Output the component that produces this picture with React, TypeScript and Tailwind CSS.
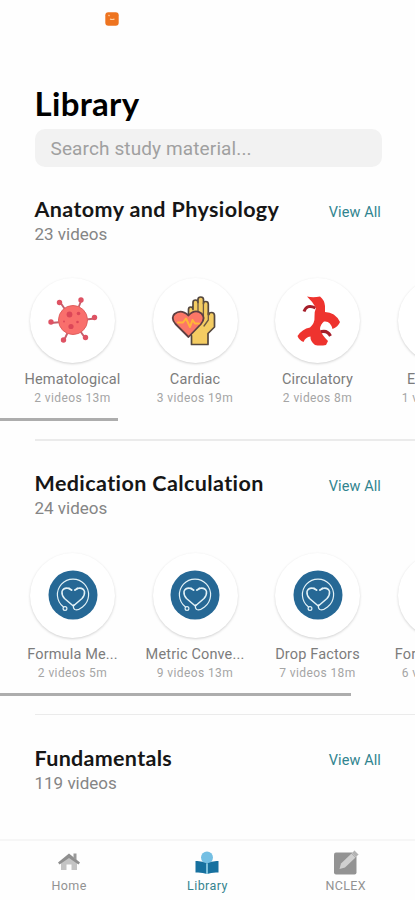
import clsx from "clsx";
import type { ReactNode } from "react";

interface Topic {
  name: string;
  info: string;
  icon?: ReactNode;
}

interface SectionProps {
  title: string;
  total: string;
  titleClass: string;
  topics?: Topic[];
  barClass?: string;
}

const VirusIcon = () => (
  <svg width="50" height="50" viewBox="0 0 50 50">
    <g stroke="#c4606c" strokeWidth="1.9">
      <path d="M25 25 12 6M25 25 33.500 4M25 25 47 22.500M25 25 37.500 42.500M25 25 15.500 45.500M25 25 2.500 27" />
    </g>
    <g fill="#de5263">
      <circle cx="11.500" cy="6.500" r="2.700" />
      <circle cx="33" cy="4" r="2.700" />
      <circle cx="46.500" cy="21.500" r="2.700" />
      <circle cx="37.500" cy="41.500" r="2.700" />
      <circle cx="15.500" cy="44" r="2.700" />
      <circle cx="3" cy="26" r="2.700" />
    </g>
    <circle cx="25" cy="24" r="14.500" fill="#f96f6c" stroke="#e0605f" strokeWidth="1" />
    <g fill="#dc4658">
      <circle cx="21.500" cy="18.500" r="2.900" />
      <circle cx="30.500" cy="17.500" r="1.800" />
      <circle cx="23" cy="30.500" r="2.600" />
      <circle cx="29.500" cy="26" r="1.300" />
      <circle cx="16" cy="25.500" r=".9" />
    </g>
  </svg>
);

const HeartHandIcon = () => (
  <svg width="50" height="50" viewBox="0 0 50 50" strokeLinejoin="round" strokeLinecap="round">
    <path
      d="M21.500 48.500V40L18.500 30V13.500Q18.500 11 20.700 11Q23 11 23 13.500V6.500Q23 4 25.500 4Q28 4 28 6.500V3.500Q28 1 30.700 1Q33.500 1 33.500 3.500V7.500Q33.500 5.500 35.700 5.500Q38.300 5.500 38.300 8V18.500L39 18.500Q39 16.500 41.500 16.500Q44.500 16.500 44.500 19.500V31L38 37.500V48.500Z"
      fill="#f4cc62"
      stroke="#55483f"
      strokeWidth="1.700"
    />
    <path d="M28 6V19M33.400 7V20M38.300 17V24L34 30" fill="none" stroke="#6b5843" strokeWidth="1.300" />
    <path
      d="M18.500 41 5.500 28Q.500 22 4.500 18Q11 12.500 18.500 19.500Q25 12.500 31.500 17.500Q36 22 31 28Z"
      fill="#fb7767"
      stroke="#5d3f42"
      strokeWidth="1.800"
    />
    <path d="M8 26.500H13L16 22.500L20 31L22.500 24L25 27.500H29" fill="none" stroke="#ffb638" strokeWidth="2" />
  </svg>
);

const ArteryIcon = () => (
  <svg width="50" height="50" viewBox="0 0 50 50" fill="none">
    <path d="M22.500 12Q14 7.500 11 15.500" stroke="#a51e2a" strokeWidth="3" />
    <path d="M26 36.500Q34 33 37.500 40" stroke="#a51e2a" strokeWidth="3" />
    <path
      d="M14 .500Q20 2 27 .500Q31.500 4 32 10V16Q42 16 47 26Q45 31 39.500 33Q37.500 24.500 31 25.500Q27.500 28 27 33Q28 38 35 45L33 49Q27 50 22 49Q17 45 17.500 40.500Q12.500 41 10.500 46Q6 44 4.500 40Q9 33 17 31.500Q22 27 21.500 21Q21 16 23 12Q20 6 14 .500Z"
      fill="#ee332e"
    />
  </svg>
);

const StethoscopeIcon = () => (
  <svg width="50" height="50" viewBox="0 0 50 50" fill="none">
    <circle cx="25" cy="25" r="24.500" fill="#266895" />
    <g stroke="#e3f2f7" strokeLinecap="round" strokeLinejoin="round">
      <path d="M15.500 37A15.600 15.600 0 1 1 34.500 37Q29.500 41 26.800 39.500Q24.500 38 26 34.500" strokeWidth="1.200" />
      <path d="M21.500 18.500Q15.500 17 14 21.500Q13.500 25 16.500 28.500L25.300 36L34 28.500Q37 25 36.500 21.500Q35 17 29 18.500" strokeWidth="1.500" />
      <path d="M21 18.500 23.500 20M29.500 18.500 27 20" strokeWidth="2" />
      <circle cx="17" cy="38.500" r="1.900" strokeWidth="1.200" />
    </g>
  </svg>
);

const anatomyTopics: Topic[] = [
  { name: "Hematological", info: "2 videos 13m", icon: <VirusIcon /> },
  { name: "Cardiac", info: "3 videos 19m", icon: <HeartHandIcon /> },
  { name: "Circulatory", info: "2 videos 8m", icon: <ArteryIcon /> },
  { name: "Endocrine", info: "1 videos 10m" },
];

const medicationTopics: Topic[] = [
  { name: "Formula Me...", info: "2 videos 5m", icon: <StethoscopeIcon /> },
  { name: "Metric Conve...", info: "9 videos 13m", icon: <StethoscopeIcon /> },
  { name: "Drop Factors", info: "7 videos 18m", icon: <StethoscopeIcon /> },
  { name: "Formula Me...", info: "6 videos 21m" },
];

const TopicItem = ({ topic }: { topic: Topic }) => {
  return (
    <div className="flex w-[122.5px] shrink-0 flex-col items-center whitespace-nowrap">
      <div className="flex size-[85px] items-center justify-center rounded-full bg-white shadow-[0_1px_2.5px_rgba(0,0,0,0.18)]">
        {topic.icon}
      </div>
      <div className="mt-[7px] text-[14.5px] leading-5 tracking-[0.15px] text-[#7c7c7c]">{topic.name}</div>
      <div className="text-[12px] leading-4 tracking-[0.4px] text-[#a5a5a5]">{topic.info}</div>
    </div>
  );
};

const Section = ({ title, total, titleClass, topics, barClass }: SectionProps) => {
  return (
    <section className={clsx("shrink-0", topics && "h-[274.4px]")}>
      <div className="flex items-center justify-between pr-[34px] pl-[34.5px]">
        <h2 className={clsx("-mt-px mb-px font-['Lato'] text-[21.5px] leading-[26px] font-bold text-[#161616]", titleClass)}>
          {title}
        </h2>
        <span className="pt-[5px] text-[14.5px] leading-5 tracking-[0.1px] text-[#30848f]">View All</span>
      </div>
      <div className="pl-[34.5px] text-[17px] leading-[22px] text-[#858585]">{total}</div>
      {topics && (
        <>
          <div className="mt-[33.3px] flex pl-[11.25px]">
            {topics.map((topic, index) => (
              <TopicItem key={index} topic={topic} />
            ))}
          </div>
          <div className={clsx("mt-[12.2px] h-[3px] bg-[#adadad]", barClass)} />
          <div className="mt-[18px] ml-[35px] h-[1.5px] bg-[#ebebeb]" />
        </>
      )}
    </section>
  );
};

const HomeIcon = () => (
  <svg width="24" height="20" viewBox="0 0 24 20">
    <path d="M4 10 12 4 20 10V18H14.500V12.500H9.500V18H4Z" fill="#c4c4c4" />
    <path d="M1 10.500 12 1.500 23 10.500 21.500 12.500 12 6 2.500 12.500Z" fill="#8f8f8f" />
    <path d="M16.500 1.500H19.500V8L16.500 5.500Z" fill="#999" />
  </svg>
);

const LibraryIcon = () => (
  <svg width="24" height="24" viewBox="0 0 24 24">
    <circle cx="12" cy="6.500" r="6" fill="#74bfe3" />
    <path d="M.500 10Q7 9.500 12 12.500V23Q7 21 .500 21.500Z" fill="#17719f" />
    <path d="M23.500 10Q17 9.500 12 12.500V23Q17 21 23.500 21.500Z" fill="#17719f" />
    <path d="M12 12.500V23" stroke="#8ccbe3" strokeWidth="1.800" />
  </svg>
);

const NclexIcon = () => (
  <svg width="26" height="25" viewBox="0 0 26 25">
    <rect x="1" y="2.500" width="22.500" height="22" rx="2" fill="#939393" />
    <path d="M6.500 19 8 13.500 18.500 3.500 22.500 7.500 12 17.500Z" fill="#d0d0d0" />
    <path d="M19 3 21.500.500 25.500 4.500 23 7Z" fill="#b3b3b3" stroke="#ddd" strokeWidth=".5" />
  </svg>
);

const App = () => {
  return (
    <main className="flex h-[900px] w-full flex-col overflow-hidden bg-[#fefefe] font-['Roboto',sans-serif]">
      <div className="h-[82.5px] shrink-0 pt-[12px] pl-[104.5px]">
        <svg width="14" height="14" viewBox="0 0 14 14">
          <rect x=".3" y=".3" width="13.400" height="13.400" rx="3" fill="#ee7420" />
          <path d="M3.500 3 4.500 4M5 7Q7 8 9.500 7" stroke="#ffd0a4" strokeWidth="1.200" fill="none" />
        </svg>
      </div>
      <h1 className="h-[46px] shrink-0 pl-[34.5px] font-['Lato'] text-[33px] leading-[40px] font-bold tracking-[0.3px] text-black">
        Library
      </h1>
      <input
        className="mr-[33px] mb-[30px] ml-[34.5px] h-[38.5px] shrink-0 rounded-[10px] bg-[#f2f2f2] px-4 pt-0.5 text-[19px] tracking-[0.12px] text-[#555] outline-none placeholder:text-[#a0a0a0]"
        placeholder="Search study material..."
      />
      <div className="flex min-h-0 flex-1 flex-col overflow-hidden">
        <Section
          title="Anatomy and Physiology"
          total="23 videos"
          titleClass="tracking-[0.4px]"
          topics={anatomyTopics}
          barClass="w-[118px]"
        />
        <Section
          title="Medication Calculation"
          total="24 videos"
          titleClass="tracking-[0.4px]"
          topics={medicationTopics}
          barClass="w-[351px]"
        />
        <Section title="Fundamentals" total="119 videos" titleClass="tracking-[0.3px]" />
      </div>
      <nav className="flex h-[61px] shrink-0 border-t-2 border-[#f6f6f6] bg-[#fefefe] text-[12.5px] leading-4 tracking-[0.4px] text-[#929292]">
        <div className="flex w-[138.3px] flex-col items-center pt-[11px]">
          <div className="h-[26px]">
            <HomeIcon />
          </div>
          Home
        </div>
        <div className="flex w-[138.3px] flex-col items-center pt-[10px] text-[#35848f]">
          <div className="h-[27px]">
            <LibraryIcon />
          </div>
          Library
        </div>
        <div className="flex w-[138.3px] flex-col items-center pt-[9px]">
          <div className="h-[28px]">
            <NclexIcon />
          </div>
          NCLEX
        </div>
      </nav>
    </main>
  );
};

export default App;
